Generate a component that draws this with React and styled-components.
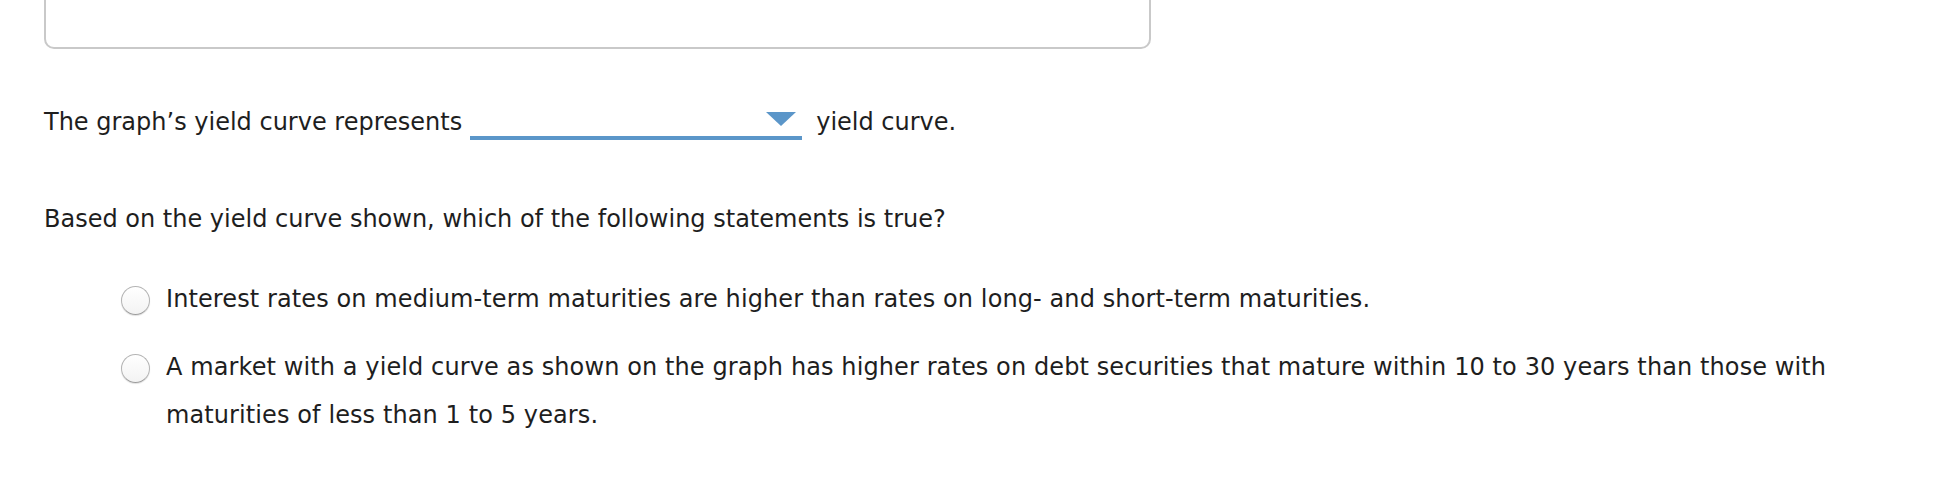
import styled, { createGlobalStyle } from "styled-components";

const GlobalStyle = createGlobalStyle`
  html, body {
    margin: 0;
    padding: 0;
    background: #fff;
  }
  body {
    font-family: Verdana, "DejaVu Sans", sans-serif;
    color: #1e1e1e;
  }
`;

const Page = styled.div`
  padding: 0 0 0 44px;
  font-size: 24px;
  line-height: 48px;
  overflow: hidden;
  height: 480px;
  box-sizing: border-box;
`;

const AnswerBox = styled.div`
  width: 1107px;
  height: 109px;
  margin-top: -60px;
  box-sizing: border-box;
  border: 2px solid #c9c9c9;
  border-radius: 10px;
  background: #fff;
`;

const Line = styled.p`
  margin: ${(p) => p.$top}px 0 0 0;
  white-space: nowrap;
`;

const Select = styled.span`
  position: relative;
  display: inline-block;
  width: 332px;
  height: 30px;
  box-sizing: border-box;
  border-bottom: 4px solid #5b96c9;
  vertical-align: -10px;
  margin: 0 14px 0 8px;
  cursor: pointer;
`;

const Arrow = styled.span`
  position: absolute;
  right: 6px;
  top: 2px;
  width: 0;
  height: 0;
  border-left: 15px solid transparent;
  border-right: 15px solid transparent;
  border-top: 14px solid #5b96c9;
`;

const Options = styled.div`
  margin-top: 32px;
  display: flex;
  flex-direction: column;
  gap: 20px;
`;

const Option = styled.label`
  display: flex;
  align-items: flex-start;
  padding-left: 77px;
  cursor: pointer;
`;

const Radio = styled.span`
  flex: none;
  width: 29px;
  height: 29px;
  margin-top: 11px;
  margin-right: 16px;
  box-sizing: border-box;
  border-radius: 50%;
  border: 1px solid #b4b4b4;
  border-bottom-color: #9c9c9c;
  background: linear-gradient(#ffffff, #f3f3f3);
  box-shadow: 0 1px 1px rgba(0, 0, 0, 0.12);
`;

const OptionText = styled.span`
  max-width: 1730px;
  letter-spacing: 0.1px;
`;

const options = [
  "Interest rates on medium-term maturities are higher than rates on long- and short-term maturities.",
  "A market with a yield curve as shown on the graph has higher rates on debt securities that mature within 10 to 30 years than those with maturities of less than 1 to 5 years.",
];

export default function App() {
  return (
    <Page>
      <GlobalStyle />
      <AnswerBox />
      <Line $top={49}>
        The graph’s yield curve represents
        <Select>
          <Arrow />
        </Select>
        yield curve.
      </Line>
      <Line $top={49}>
        Based on the yield curve shown, which of the following statements is true?
      </Line>
      <Options>
        {options.map((text) => (
          <Option key={text}>
            <Radio />
            <OptionText>{text}</OptionText>
          </Option>
        ))}
      </Options>
    </Page>
  );
}
